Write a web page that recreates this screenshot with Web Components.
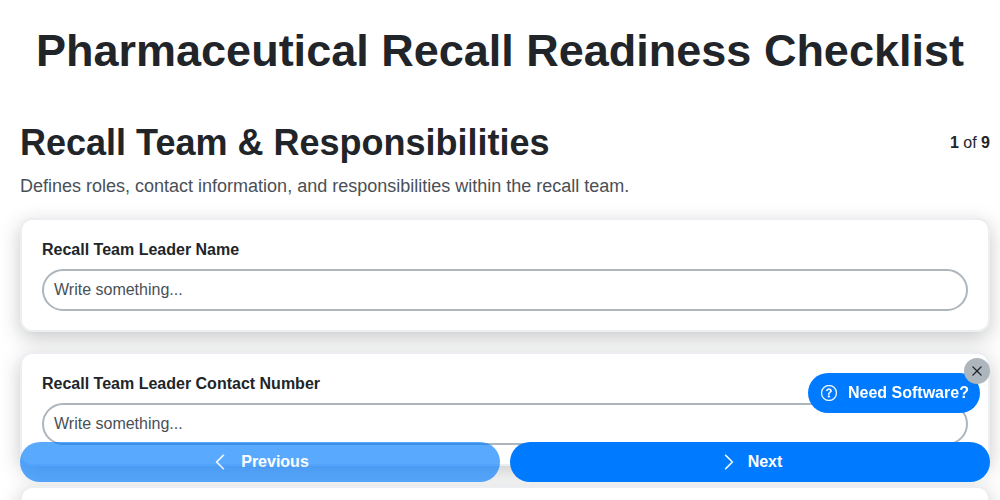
<!DOCTYPE html>
<html>
<head>
<meta charset="utf-8">
<title>Pharmaceutical Recall Readiness Checklist</title>
<style>
    html, body { margin: 0; height: 100%; overflow: hidden; }
    body { background: #fff; color: #212529; font-family: "Liberation Sans", Arial, sans-serif; }
</style>
</head>
<body>
<checklist-page>
    <span slot="title">Pharmaceutical Recall Readiness Checklist</span>
    <section-head slot="head" current="1" total="9">
        <span slot="name">Recall Team &amp; Responsibilities</span>
        <span slot="desc">Defines roles, contact information, and responsibilities within the recall team.</span>
    </section-head>
    <field-card label="Recall Team Leader Name"></field-card>
    <field-card label="Recall Team Leader Contact Number"></field-card>
    <field-card></field-card>
</checklist-page>
<nav-bar></nav-bar>
<software-bubble></software-bubble>

<script>
class ChecklistPage extends HTMLElement {
    constructor() {
        super()
        this.attachShadow({ mode: "open" })
        this.shadowRoot.innerHTML = /*html*/ `
            <style>
                :host { display: block; padding: 0 10px 0 20px; }
                h1 {
                    margin: 0;
                    padding: 27px 10px 0 0;
                    font-size: 45px;
                    line-height: 48px;
                    font-weight: 700;
                    text-align: center;
                    color: #212529;
                }
                .cards { display: flex; flex-direction: column; gap: 20px; }
            </style>
            <h1><slot name="title"></slot></h1>
            <slot name="head"></slot>
            <div class="cards"><slot></slot></div>
        `
    }
}

class SectionHead extends HTMLElement {
    constructor() {
        super()
        this.attachShadow({ mode: "open" })
        this.shadowRoot.innerHTML = /*html*/ `
            <style>
                :host { display: block; padding-top: 46px; margin-bottom: 21px; }
                .row { display: flex; justify-content: space-between; align-items: center; }
                h2 { margin: 0; font-size: 36px; line-height: 43px; font-weight: 700; color: #212529; }
                .count { font-size: 16px; color: #212529; }
                .count b { font-weight: 700; }
                p { margin: 11px 0 0; font-size: 18px; line-height: 22px; color: #495057; }
            </style>
            <div class="row">
                <h2><slot name="name"></slot></h2>
                <div class="count"><b id="cur"></b> of <b id="tot"></b></div>
            </div>
            <p><slot name="desc"></slot></p>
        `
        this.shadowRoot.getElementById("cur").textContent = this.getAttribute("current")
        this.shadowRoot.getElementById("tot").textContent = this.getAttribute("total")
    }
}

class FieldCard extends HTMLElement {
    constructor() {
        super()
        this.attachShadow({ mode: "open" })
        const label = this.getAttribute("label")
        this.shadowRoot.innerHTML = /*html*/ `
            <style>
                :host {
                    display: block;
                    box-sizing: border-box;
                    height: 114px;
                    padding: 20px;
                    background: #fff;
                    border: 2px solid #eceef2;
                    border-radius: 12px;
                    box-shadow: 0 6px 20px rgba(33, 37, 41, .25);
                }
                label { display: block; font-size: 16px; line-height: 19px; font-weight: 700; margin-bottom: 10px; color: #212529; }
                input {
                    display: block;
                    box-sizing: border-box;
                    width: 100%;
                    height: 42px;
                    padding: 0 10px;
                    border: 2px solid #adb5bd;
                    border-radius: 21px;
                    background: #fff;
                    outline: none;
                    font: 16px "Liberation Sans", Arial, sans-serif;
                    color: #495057;
                }
                input::placeholder { color: #495057; opacity: 1; }
            </style>
            ${label ? `<label>${label}</label><input type="text" placeholder="Write something...">` : ""}
        `
    }
}

class NavBar extends HTMLElement {
    constructor() {
        super()
        this.attachShadow({ mode: "open" })
        this.shadowRoot.innerHTML = /*html*/ `
            <style>
                :host {
                    position: fixed;
                    left: 20px;
                    right: 10px;
                    top: 442px;
                    display: flex;
                    gap: 10px;
                }
                button {
                    all: unset;
                    flex: 1;
                    height: 40px;
                    display: flex;
                    align-items: center;
                    justify-content: center;
                    gap: 12px;
                    border-radius: 20px;
                    background: #007bff;
                    color: #fff;
                    font: 700 16px "Liberation Sans", Arial, sans-serif;
                }
                button.off { opacity: .65; }
                svg { width: 18px; height: 18px; fill: currentColor; stroke: currentColor; stroke-width: .4; }
                .nudge { margin: 0 -2px 0 2px; }
            </style>
            <button class="off">
                <svg viewBox="0 0 16 16"><path fill-rule="evenodd" d="M11.354 1.646a.5.5 0 0 1 0 .708L5.707 8l5.647 5.646a.5.5 0 0 1-.708.708l-6-6a.5.5 0 0 1 0-.708l6-6a.5.5 0 0 1 .708 0z"/></svg>
                Previous
            </button>
            <button>
                <svg class="nudge" viewBox="0 0 16 16"><path fill-rule="evenodd" d="M4.646 1.646a.5.5 0 0 1 .708 0l6 6a.5.5 0 0 1 0 .708l-6 6a.5.5 0 0 1-.708-.708L10.293 8 4.646 2.354a.5.5 0 0 1 0-.708z"/></svg>
                Next
            </button>
        `
    }
}

class SoftwareBubble extends HTMLElement {
    constructor() {
        super()
        this.attachShadow({ mode: "open" })
        this.shadowRoot.innerHTML = /*html*/ `
            <style>
                :host {
                    position: fixed;
                    left: 808px;
                    top: 373px;
                    width: 172px;
                    height: 40px;
                    display: flex;
                    align-items: center;
                    box-sizing: border-box;
                    padding-left: 13px;
                    gap: 11px;
                    border-radius: 20px;
                    background: #007bff;
                    color: #fff;
                    font: 700 16px "Liberation Sans", Arial, sans-serif;
                    white-space: nowrap;
                }
                svg.q { width: 16px; height: 16px; fill: currentColor; stroke: currentColor; stroke-width: .3; flex: none; }
                .close {
                    position: absolute;
                    left: 156px;
                    top: -15px;
                    width: 26px;
                    height: 26px;
                    border-radius: 50%;
                    background: #adb5bd;
                    display: flex;
                    align-items: center;
                    justify-content: center;
                    color: #212529;
                }
                .close svg { width: 22px; height: 22px; fill: currentColor; }
            </style>
            <svg class="q" viewBox="0 0 16 16">
                <path d="M8 15A7 7 0 1 1 8 1a7 7 0 0 1 0 14zm0 1A8 8 0 1 0 8 0a8 8 0 0 0 0 16z"/>
                <path d="M5.255 5.786a.237.237 0 0 0 .241.247h.825c.138 0 .248-.113.266-.25.09-.656.54-1.134 1.342-1.134.686 0 1.314.343 1.314 1.168 0 .635-.374.927-.965 1.371-.673.489-1.206 1.06-1.168 1.987l.003.217a.25.25 0 0 0 .25.246h.811a.25.25 0 0 0 .25-.25v-.105c0-.718.273-.927 1.01-1.486.609-.463 1.244-.977 1.244-2.056 0-1.511-1.276-2.241-2.673-2.241-1.267 0-2.655.59-2.75 2.286zm1.557 5.763c0 .533.425.927 1.01.927.609 0 1.028-.394 1.028-.927 0-.552-.42-.94-1.029-.94-.584 0-1.009.388-1.009.94z"/>
            </svg>
            <span>Need Software?</span>
            <div class="close">
                <svg viewBox="0 0 16 16"><path d="M4.646 4.646a.5.5 0 0 1 .708 0L8 7.293l2.646-2.647a.5.5 0 0 1 .708.708L8.707 8l2.647 2.646a.5.5 0 0 1-.708.708L8 8.707l-2.646 2.647a.5.5 0 0 1-.708-.708L7.293 8 4.646 5.354a.5.5 0 0 1 0-.708z"/></svg>
            </div>
        `
    }
}

customElements.define("checklist-page", ChecklistPage)
customElements.define("section-head", SectionHead)
customElements.define("field-card", FieldCard)
customElements.define("nav-bar", NavBar)
customElements.define("software-bubble", SoftwareBubble)
</script>
</body>
</html>
